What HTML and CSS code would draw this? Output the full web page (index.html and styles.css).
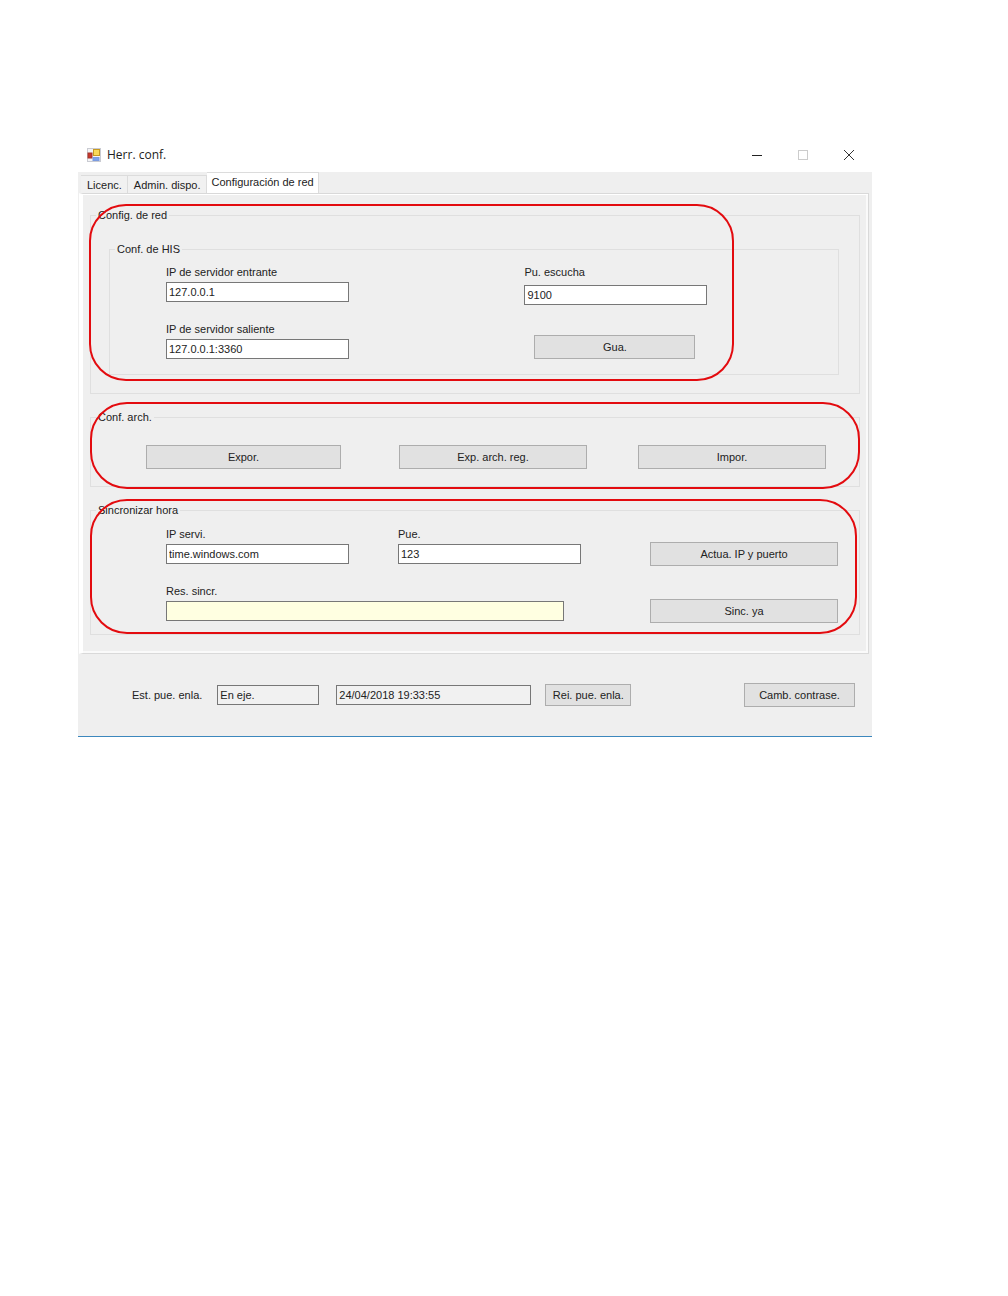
FILE: index.html
```html
<!DOCTYPE html>
<html lang="es">
<head>
    <meta charset="UTF-8">
    <meta name="viewport" content="width=device-width, initial-scale=1.0">
    <title>Herr. conf.</title>
    <link rel="stylesheet" href="styles.css">
</head>
<body>
    <main class="window">
        <header class="titlebar">
            <svg class="app-icon" width="14" height="14" viewBox="0 0 14 14">
                <rect x="0.5" y="0.5" width="13" height="13" fill="#f4f4f6" stroke="#c9cbd2"/>
                <rect x="6.5" y="1.5" width="6" height="6" fill="#f9d95a" stroke="#c79a22"/>
                <rect x="1" y="5" width="4" height="5" fill="#c8372b" stroke="#a5352b"/>
                <rect x="6" y="9.5" width="6" height="3" fill="#7da2ec" stroke="#7b9be0"/>
            </svg>
            <h1>Herr. conf.</h1>
            <div class="controls">
                <button type="button" aria-label="Minimizar">
                    <svg width="12" height="12" viewBox="0 0 12 12"><path d="M1 6.5H11" stroke="#222"/></svg>
                </button>
                <button type="button" aria-label="Maximizar" disabled>
                    <svg width="12" height="12" viewBox="0 0 12 12"><rect x="1.5" y="1.5" width="9" height="9" fill="none" stroke="#ccc"/></svg>
                </button>
                <button type="button" aria-label="Cerrar">
                    <svg width="12" height="12" viewBox="0 0 12 12"><path d="M1 1L11 11M11 1L1 11" stroke="#333"/></svg>
                </button>
            </div>
        </header>

        <div class="content">
            <div class="tabs" role="tablist">
                <button type="button" class="tab" role="tab">Licenc.</button>
                <button type="button" class="tab" role="tab">Admin. dispo.</button>
                <button type="button" class="tab active" role="tab" aria-selected="true">Configuración de red</button>
            </div>

            <div class="panel" role="tabpanel">
                <section class="group">
                    <fieldset>
                        <legend>Config. de red</legend>
                        <div class="network">
                            <fieldset>
                                <legend>Conf. de HIS</legend>
                                <div class="his">
                                    <div class="his-col">
                                        <div class="field">
                                            <label for="ip-in">IP de servidor entrante</label>
                                            <input type="text" id="ip-in" value="127.0.0.1">
                                        </div>
                                        <div class="field">
                                            <label for="ip-out">IP de servidor saliente</label>
                                            <input type="text" id="ip-out" value="127.0.0.1:3360">
                                        </div>
                                    </div>
                                    <div class="his-col listen">
                                        <div class="field">
                                            <label for="port-in">Pu. escucha</label>
                                            <input type="text" id="port-in" value="9100">
                                        </div>
                                        <button type="button" class="btn save">Gua.</button>
                                    </div>
                                </div>
                            </fieldset>
                        </div>
                    </fieldset>
                    <div class="mark mark-network"></div>
                </section>

                <section class="group">
                    <fieldset>
                        <legend>Conf. arch.</legend>
                        <div class="files">
                            <button type="button" class="btn">Expor.</button>
                            <button type="button" class="btn">Exp. arch. reg.</button>
                            <button type="button" class="btn">Impor.</button>
                        </div>
                    </fieldset>
                    <div class="mark mark-files"></div>
                </section>

                <section class="group">
                    <fieldset>
                        <legend>Sincronizar hora</legend>
                        <div class="sync">
                            <div class="field">
                                <label for="sync-ip">IP servi.</label>
                                <input type="text" id="sync-ip" value="time.windows.com">
                            </div>
                            <div class="field">
                                <label for="sync-port">Pue.</label>
                                <input type="text" id="sync-port" value="123">
                            </div>
                            <button type="button" class="btn">Actua. IP y puerto</button>
                            <div class="field result">
                                <label for="sync-result">Res. sincr.</label>
                                <input type="text" id="sync-result" readonly>
                            </div>
                            <button type="button" class="btn">Sinc. ya</button>
                        </div>
                    </fieldset>
                    <div class="mark mark-sync"></div>
                </section>
            </div>

            <footer class="status">
                <label for="state">Est. pue. enla.</label>
                <input type="text" id="state" class="state" value="En eje." readonly>
                <input type="text" class="date" aria-label="Fecha" value="24/04/2018 19:33:55" readonly>
                <button type="button" class="btn restart">Rei. pue. enla.</button>
                <button type="button" class="btn password">Camb. contrase.</button>
            </footer>
        </div>
    </main>
</body>
</html>
```
FILE: styles.css
```css
*{
    box-sizing: border-box;
}
body{
    margin: 0;
    padding: 138px 136px 40px 78px;
    background-color: #fff;
    color: #222;
    font-family: "Liberation Sans", Arial, sans-serif;
    font-size: 11px;
    line-height: 16px;
}
button, input{
    font: inherit;
    color: inherit;
}
.window{
    border-bottom: 1px solid #3c87bd;
}

/* title bar */
.titlebar{
    display: flex;
    align-items: center;
    height: 34px;
    padding-left: 9px;
}
.titlebar h1{
    margin: 0 0 0 6px;
    font-family: "Open Sans", sans-serif;
    font-size: 12px;
    font-weight: 400;
}
.controls{
    display: flex;
    margin-left: auto;
}
.controls button{
    display: flex;
    justify-content: center;
    align-items: center;
    width: 46px;
    height: 34px;
    padding: 0;
    border: none;
    background: none;
}

/* tabs */
.content{
    background-color: #efefef;
}
.tabs{
    display: flex;
    align-items: flex-end;
    height: 21px;
    padding-left: 3px;
}
.tab{
    height: 18px;
    padding: 0 5px 0 6px;
    border: 1px solid #dcdcdc;
    border-width: 1px 1px 0 0;
    background-color: #f1f1f1;
    white-space: nowrap;
}
.tab.active{
    height: 21px;
    padding: 0 4px 2px 5px;
    background-color: #fff;
}
.panel{
    margin: 0 3px 0 1px;
    padding: 13px 8px 18px 7px;
    border: 1px solid #d9d9d9;
    border-left: 4px solid #fff;
    box-shadow: inset 0 1px #fff, inset -2px -2px #fafafa;
}

/* groups */
.group{
    position: relative;
}
.group + .group{
    margin-top: 15px;
}
fieldset{
    min-width: 0;
    margin: 0;
    padding: 0;
    border: 1px solid #dfdfdf;
}
legend{
    margin-left: 5px;
    padding: 0 2px;
}
.network{
    padding: 18px 20px 18px 18px;
}
.his{
    display: grid;
    grid-template-columns: 8fr 7fr;
    padding: 7px 0 15px 56px;
}
.his-col{
    display: flex;
    flex-direction: column;
    gap: 19px;
}
.files{
    display: grid;
    grid-template-columns: 253fr 239fr 188fr;
    padding: 20px 33px 17px 55px;
}
.files .btn{
    width: 188px;
}
.files .btn:first-child{
    width: 195px;
}
.sync{
    display: grid;
    grid-template-columns: 232fr 252fr 188fr;
    row-gap: 19px;
    align-items: end;
    padding: 8px 21px 13px 75px;
}
.sync .btn{
    margin-bottom: -2px;
}
.result{
    grid-column: 1 / 3;
}

/* fields */
.field{
    display: flex;
    flex-direction: column;
    gap: 2px;
}
input{
    width: 183px;
    height: 20px;
    padding: 0 2px;
    border: 1px solid #777;
    background-color: #fff;
}
.result input{
    width: 398px;
    background-color: #ffffe1;
}
.listen{
    gap: 30px;
}
.listen .field{
    gap: 5px;
}
.btn{
    height: 24px;
    padding: 0;
    border: 1px solid #adadad;
    background-color: #e1e1e1;
    white-space: nowrap;
}
.save{
    width: 161px;
    margin-left: 10px;
}

/* red outlines over the groups */
.mark{
    position: absolute;
    border: 2px solid #e30b0f;
    border-radius: 37px;
    pointer-events: none;
}
.mark-network{
    inset: -3px 126px 13px -1px;
}
.mark-files{
    inset: -7px 0 -2px 0;
}
.mark-sync{
    inset: -3px 3px 1px 0;
}

/* status bar */
.status{
    display: flex;
    align-items: center;
    height: 82px;
    padding: 0 17px 0 54px;
}
.status input{
    background-color: #f1f1f1;
}
.status .state{
    width: 102px;
    margin: 0 17px 0 15px;
}
.status .date{
    width: 195px;
}
.restart{
    width: 86px;
    height: 22px;
    margin-left: 14px;
}
.password{
    width: 111px;
    margin-left: auto;
}
```
